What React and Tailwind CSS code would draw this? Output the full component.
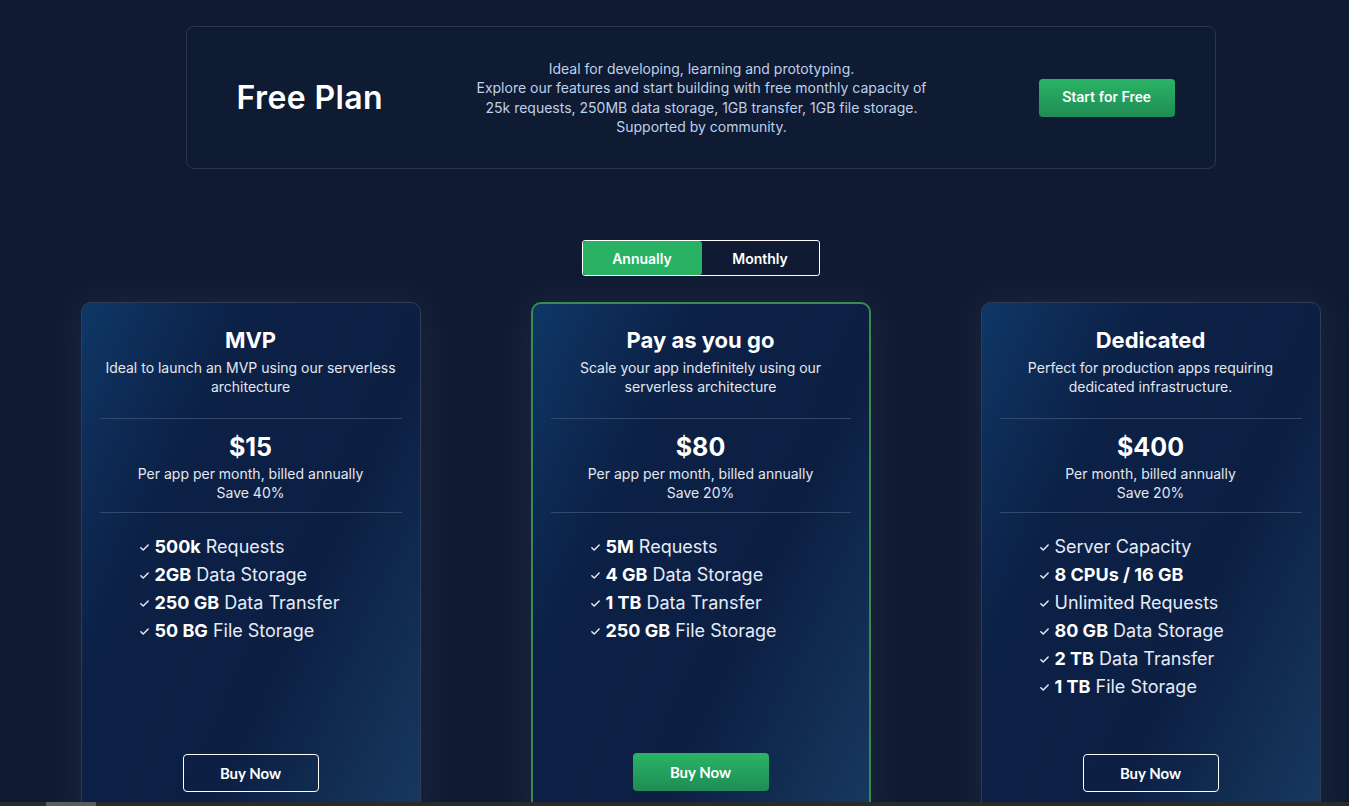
import React from "react";

const plans = [
  {
    name: "MVP",
    desc: ["Ideal to launch an MVP using our serverless", "architecture"],
    price: "$15",
    note: "Per app per month, billed annually",
    save: "Save 40%",
    features: [
      ["500k", " Requests"],
      ["2GB", " Data Storage"],
      ["250 GB", " Data Transfer"],
      ["50 BG", " File Storage"],
    ],
  },
  {
    name: "Pay as you go",
    desc: ["Scale your app indefinitely using our", "serverless architecture"],
    price: "$80",
    note: "Per app per month, billed annually",
    save: "Save 20%",
    featured: true,
    features: [
      ["5M", " Requests"],
      ["4 GB", " Data Storage"],
      ["1 TB", " Data Transfer"],
      ["250 GB", " File Storage"],
    ],
  },
  {
    name: "Dedicated",
    desc: ["Perfect for production apps requiring", "dedicated infrastructure."],
    price: "$400",
    note: "Per month, billed annually",
    save: "Save 20%",
    features: [
      ["", "Server Capacity"],
      ["8 CPUs / 16 GB", ""],
      ["", "Unlimited Requests"],
      ["80 GB", " Data Storage"],
      ["2 TB", " Data Transfer"],
      ["1 TB", " File Storage"],
    ],
  },
];

const Check = () => (
  <svg width="11" height="11" viewBox="0 0 12 12" className="mr-[5px] shrink-0">
    <path d="M2 6.3 4.6 8.8 10 3.3" fill="none" stroke="#e5ecf6" strokeWidth="1.6" strokeLinecap="round" strokeLinejoin="round" />
  </svg>
);

const PlanCard = ({ plan }) => (
  <div
    className={`relative flex h-[530px] w-[340px] flex-col rounded-[10px] bg-[linear-gradient(115deg,#0f3766_0%,#0c2147_28%,#0c1f43_62%,#183a60_100%)] shadow-[0_0_40px_rgba(120,130,150,0.12)] ${
      plan.featured ? "border-2 border-[#3b8a4f]" : "border border-[#2c3d5c]"
    }`}
  >
    <div className={`flex flex-col items-center px-[18px] ${plan.featured ? "pt-[22px]" : "pt-[23px]"}`}>
      <h3 className="text-[22px] font-bold leading-[28px] text-white">{plan.name}</h3>
      <p className="mt-[4px] text-center text-[14px] leading-[19px] text-[#e2e8f0]">
        {plan.desc[0]}
        <br />
        {plan.desc[1]}
      </p>
      <div className="mt-[22px] h-px w-full bg-[#34486a]" />
      <div className="mt-[12px] text-[25px] font-bold leading-[32px] text-white">{plan.price}</div>
      <p className="mt-px text-center text-[14px] leading-[19px] text-[#e2e8f0]">
        {plan.note}
        <br />
        {plan.save}
      </p>
      <div className="mt-[10px] h-px w-full bg-[#34486a]" />
    </div>
    <ul className="mt-[20px] pl-[57px] text-[18px] leading-[28px] text-[#e5ecf6]">
      {plan.features.map(([b, r], i) => (
        <li key={i} className="flex items-center">
          <Check />
          <span>
            {b && <b className="font-bold text-white">{b}</b>}
            {r}
          </span>
        </li>
      ))}
    </ul>
    <div className="mt-auto flex justify-center pb-[39px]">
      {plan.featured ? (
        <button className="h-[38px] w-[136px] rounded-[4px] bg-[linear-gradient(180deg,#2ab466,#1f8c55)] font-['Lato'] text-[15px] font-bold text-white">
          Buy Now
        </button>
      ) : (
        <button className="h-[38px] w-[136px] rounded-[4px] border border-white font-['Lato'] text-[15px] font-bold text-white">
          Buy Now
        </button>
      )}
    </div>
  </div>
);

export default function App() {
  return (
    <div className="relative h-[806px] overflow-hidden bg-[#101b33] font-['Inter',sans-serif]">
      <div className="w-[1401px]">
        <div className="flex justify-center pt-[26px]">
          <div className="flex h-[143px] w-[1030px] items-center rounded-[8px] border border-[#2a3652] bg-[#0f1b33] pl-[50px] pr-[40px]">
            <h2 className="w-[225px] text-[32px] font-semibold tracking-[0.4px] text-white">Free Plan</h2>
            <p className="w-[480px] text-center text-[14px] leading-[19.5px] text-[#bfd0ea]">
              Ideal for developing, learning and prototyping.
              <br />
              Explore our features and start building with free monthly capacity of
              <br />
              25k requests, 250MB data storage, 1GB transfer, 1GB file storage.
              <br />
              Supported by community.
            </p>
            <button className="ml-auto h-[38px] w-[136px] rounded-[4px] bg-[linear-gradient(180deg,#2ab466,#1f8c55)] font-['Roboto'] text-[15px] font-medium text-white">
              Start for Free
            </button>
          </div>
        </div>

        <div className="mt-[71px] flex justify-center">
          <div className="flex h-[36px] w-[238px] overflow-hidden rounded-[3px] border border-white text-[14px] font-semibold text-white">
            <button className="w-[119px] rounded-[3px] bg-[#2ab264]">Annually</button>
            <button className="flex-1">Monthly</button>
          </div>
        </div>

        <div className="mt-[26px] flex justify-center gap-[110px]">
          {plans.map((p) => (
            <PlanCard key={p.name} plan={p} />
          ))}
        </div>
      </div>

      <div className="absolute bottom-0 left-0 h-[4px] w-full bg-[#2a2a2a]">
        <div className="ml-[46px] h-full w-[50px] bg-[#5c5c5c]" />
      </div>
    </div>
  );
}
